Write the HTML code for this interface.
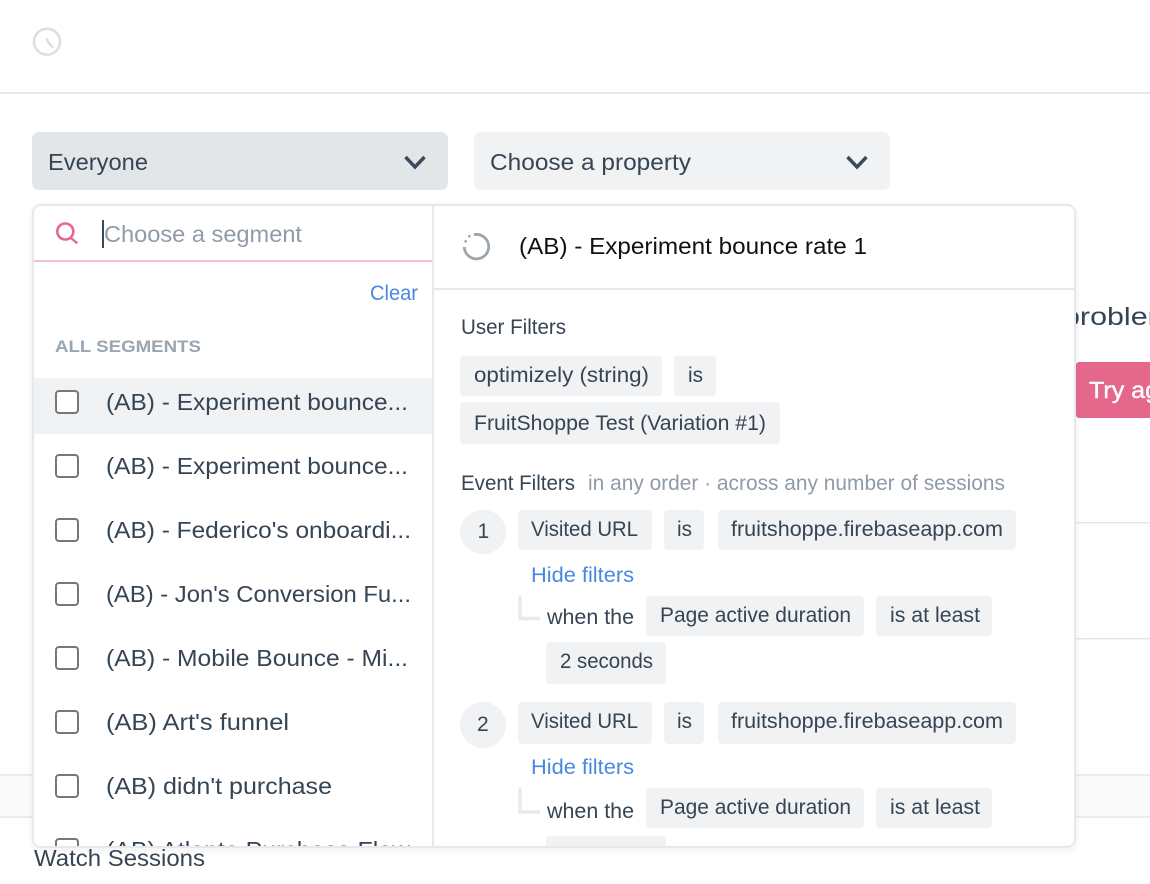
<!DOCTYPE html>
<html>
<head>
<meta charset="utf-8">
<style>
html,body{margin:0;padding:0;width:1150px;height:884px;overflow:hidden;background:#fff}
svg{display:block}
text{font-family:"Liberation Sans",sans-serif;font-size:22px;fill:#364554}
.s{font-size:21px}
.g{fill:#8f9ba8}
.b{fill:#4a88e0}
.chip{fill:#f0f2f4}
.cb{fill:#fff;stroke:#777;stroke-width:2}
.el{fill:none;stroke:#e7eaed;stroke-width:3.500}
</style>
</head>
<body>
<svg width="1150" height="884" viewBox="0 0 1150 884" xmlns="http://www.w3.org/2000/svg">
<defs>
<clipPath id="pop"><rect x="34" y="206" width="1040" height="640" rx="7"/></clipPath>
<filter id="sh" x="-5%" y="-5%" width="110%" height="110%"><feDropShadow dx="0" dy="2" stdDeviation="3" flood-color="#3c4b5b" flood-opacity="0.08"/></filter>
</defs>

<!-- header -->
<circle cx="47" cy="41.700" r="13" fill="none" stroke="#dcdfe1" stroke-width="2.500"/>
<path d="M46.800 38 L48 42 L53 47.500" fill="none" stroke="#dcdfe1" stroke-width="2.500"/>
<rect x="0" y="92" width="1150" height="2" fill="#e5e8eb"/>

<!-- behind popup -->
<text x="1063" y="325" style="font-size:25px" textLength="110" lengthAdjust="spacingAndGlyphs">problem</text>
<rect x="1076" y="362" width="90" height="56" rx="3" fill="#e5678c"/>
<text x="1089" y="398" style="fill:#fff;font-size:23px;stroke:#fff;stroke-width:0.400" textLength="70" lengthAdjust="spacingAndGlyphs">Try ag</text>
<rect x="1076" y="522" width="74" height="1.500" fill="#e5e8eb"/>
<rect x="1076" y="638" width="74" height="1.500" fill="#e5e8eb"/>
<rect x="0" y="775" width="1150" height="42" fill="#fafafa"/>
<rect x="0" y="774" width="1150" height="2" fill="#e8eaed"/>
<rect x="0" y="816" width="1150" height="2" fill="#e8eaed"/>
<text x="34" y="866" style="font-size:23px" textLength="171" lengthAdjust="spacingAndGlyphs">Watch Sessions</text>

<!-- dropdowns -->
<rect x="32" y="132" width="416" height="58" rx="7" fill="#e3e6e9"/>
<text x="48" y="170" style="font-size:23px" textLength="100" lengthAdjust="spacingAndGlyphs">Everyone</text>
<path d="M405.500 157 L415 167 L424.500 157" fill="none" stroke="#3c4b5b" stroke-width="3.500"/>
<rect x="474" y="132" width="416" height="58" rx="7" fill="#f0f2f4"/>
<text x="490" y="170" style="font-size:23px" textLength="201" lengthAdjust="spacingAndGlyphs">Choose a property</text>
<path d="M847.500 157 L857 167 L866.500 157" fill="none" stroke="#3c4b5b" stroke-width="3.500"/>

<!-- popup -->
<rect x="33" y="205" width="1042" height="642" rx="8" fill="#fff" stroke="#e6e9ec" stroke-width="2" filter="url(#sh)"/>
<g clip-path="url(#pop)">
<rect x="432" y="206" width="2" height="640" fill="#e6e9ec"/>

<!-- search -->
<circle cx="65.300" cy="231.500" r="8" fill="none" stroke="#e5678c" stroke-width="2.600"/>
<path d="M71 238 L77.300 243.300" stroke="#e5678c" stroke-width="2.400" fill="none"/>
<rect x="102" y="220" width="2" height="28" fill="#3c4b5b"/>
<text x="104" y="242" class="g" style="font-size:23px" textLength="198" lengthAdjust="spacingAndGlyphs">Choose a segment</text>
<rect x="34" y="260" width="398" height="2" fill="#f3c1d0"/>
<text x="370" y="300" class="b" style="font-size:21px" textLength="48" lengthAdjust="spacingAndGlyphs">Clear</text>
<text x="55" y="352" style="font-size:17px;font-weight:bold;fill:#9aa5b0" textLength="146" lengthAdjust="spacingAndGlyphs">ALL SEGMENTS</text>

<!-- list -->
<rect x="34" y="378" width="398" height="56" fill="#f0f2f4"/>
<rect class="cb" x="56" y="391" width="22" height="22" rx="3"/>
<text x="106" y="410" style="font-size:23px" textLength="302" lengthAdjust="spacingAndGlyphs">(AB) - Experiment bounce...</text>
<rect class="cb" x="56" y="455" width="22" height="22" rx="3"/>
<text x="106" y="474" style="font-size:23px" textLength="302" lengthAdjust="spacingAndGlyphs">(AB) - Experiment bounce...</text>
<rect class="cb" x="56" y="519" width="22" height="22" rx="3"/>
<text x="106" y="538" style="font-size:23px" textLength="305" lengthAdjust="spacingAndGlyphs">(AB) - Federico's onboardi...</text>
<rect class="cb" x="56" y="583" width="22" height="22" rx="3"/>
<text x="106" y="602" style="font-size:23px" textLength="305" lengthAdjust="spacingAndGlyphs">(AB) - Jon's Conversion Fu...</text>
<rect class="cb" x="56" y="647" width="22" height="22" rx="3"/>
<text x="106" y="666" style="font-size:23px" textLength="302" lengthAdjust="spacingAndGlyphs">(AB) - Mobile Bounce - Mi...</text>
<rect class="cb" x="56" y="711" width="22" height="22" rx="3"/>
<text x="106" y="730" style="font-size:23px" textLength="183" lengthAdjust="spacingAndGlyphs">(AB) Art's funnel</text>
<rect class="cb" x="56" y="775" width="22" height="22" rx="3"/>
<text x="106" y="794" style="font-size:23px" textLength="226" lengthAdjust="spacingAndGlyphs">(AB) didn't purchase</text>
<rect class="cb" x="56" y="839" width="22" height="22" rx="3"/>
<text x="106" y="858" style="font-size:23px" textLength="304" lengthAdjust="spacingAndGlyphs">(AB) Atlanta Purchase Flow</text>

<!-- right header -->
<path d="M474 234.700 A12.200 12.200 0 1 1 464.300 247" fill="none" stroke="#9aa5ae" stroke-width="2.800"/>
<circle cx="469.300" cy="236.200" r="1.300" fill="#9aa5ae"/>
<circle cx="465.700" cy="241.300" r="1.300" fill="#9aa5ae"/>
<text x="519" y="254" style="font-size:23px;fill:#111" textLength="348" lengthAdjust="spacingAndGlyphs">(AB) - Experiment bounce rate 1</text>
<rect x="434" y="288" width="640" height="2" fill="#e6e9ec"/>

<!-- user filters -->
<text x="461" y="334" class="s" textLength="105" lengthAdjust="spacingAndGlyphs">User Filters</text>
<rect class="chip" x="460" y="356" width="202" height="40" rx="4"/>
<text x="474" y="382" class="s" textLength="175" lengthAdjust="spacingAndGlyphs">optimizely (string)</text>
<rect class="chip" x="674" y="356" width="42" height="40" rx="4"/>
<text x="688" y="382" class="s" textLength="15" lengthAdjust="spacingAndGlyphs">is</text>
<rect class="chip" x="460" y="402" width="320" height="42" rx="4"/>
<text x="474" y="430" class="s" textLength="292" lengthAdjust="spacingAndGlyphs">FruitShoppe Test (Variation #1)</text>

<!-- event filters -->
<text x="461" y="490" class="s" textLength="114" lengthAdjust="spacingAndGlyphs">Event Filters</text>
<text x="588" y="490" class="s g" textLength="417" lengthAdjust="spacingAndGlyphs">in any order · across any number of sessions</text>

<!-- step 1 -->
<ellipse cx="483" cy="532" rx="23" ry="22" fill="#f0f2f4"/>
<text x="477.500" y="538" class="s">1</text>
<rect class="chip" x="518" y="510" width="134" height="40" rx="4"/>
<text x="531" y="536" class="s" textLength="107" lengthAdjust="spacingAndGlyphs">Visited URL</text>
<rect class="chip" x="664" y="510" width="40" height="40" rx="4"/>
<text x="677" y="536" class="s" textLength="15" lengthAdjust="spacingAndGlyphs">is</text>
<rect class="chip" x="718" y="510" width="298" height="40" rx="4"/>
<text x="731" y="536" class="s" textLength="272" lengthAdjust="spacingAndGlyphs">fruitshoppe.firebaseapp.com</text>
<text x="531" y="582" class="s b" textLength="103" lengthAdjust="spacingAndGlyphs">Hide filters</text>
<path class="el" d="M520 596 V618.500 H540"/>
<text x="547" y="624" class="s" textLength="87" lengthAdjust="spacingAndGlyphs">when the</text>
<rect class="chip" x="646" y="596" width="218" height="40" rx="4"/>
<text x="660" y="622" class="s" textLength="191" lengthAdjust="spacingAndGlyphs">Page active duration</text>
<rect class="chip" x="876" y="596" width="116" height="40" rx="4"/>
<text x="890" y="622" class="s" textLength="90" lengthAdjust="spacingAndGlyphs">is at least</text>
<rect class="chip" x="546" y="642" width="120" height="42" rx="4"/>
<text x="560" y="668" class="s" textLength="93" lengthAdjust="spacingAndGlyphs">2 seconds</text>

<!-- step 2 -->
<ellipse cx="483" cy="725" rx="23" ry="23" fill="#f0f2f4"/>
<text x="477" y="731" class="s">2</text>
<rect class="chip" x="518" y="702" width="134" height="42" rx="4"/>
<text x="531" y="728" class="s" textLength="107" lengthAdjust="spacingAndGlyphs">Visited URL</text>
<rect class="chip" x="664" y="702" width="40" height="42" rx="4"/>
<text x="677" y="728" class="s" textLength="15" lengthAdjust="spacingAndGlyphs">is</text>
<rect class="chip" x="718" y="702" width="298" height="42" rx="4"/>
<text x="731" y="728" class="s" textLength="272" lengthAdjust="spacingAndGlyphs">fruitshoppe.firebaseapp.com</text>
<text x="531" y="774" class="s b" textLength="103" lengthAdjust="spacingAndGlyphs">Hide filters</text>
<path class="el" d="M520 788 V812 H540"/>
<text x="547" y="818" class="s" textLength="87" lengthAdjust="spacingAndGlyphs">when the</text>
<rect class="chip" x="646" y="788" width="218" height="40" rx="4"/>
<text x="660" y="814" class="s" textLength="191" lengthAdjust="spacingAndGlyphs">Page active duration</text>
<rect class="chip" x="876" y="788" width="116" height="40" rx="4"/>
<text x="890" y="814" class="s" textLength="90" lengthAdjust="spacingAndGlyphs">is at least</text>
<rect class="chip" x="546" y="836" width="120" height="42" rx="4"/>
</g>
</svg>
</body>
</html>
